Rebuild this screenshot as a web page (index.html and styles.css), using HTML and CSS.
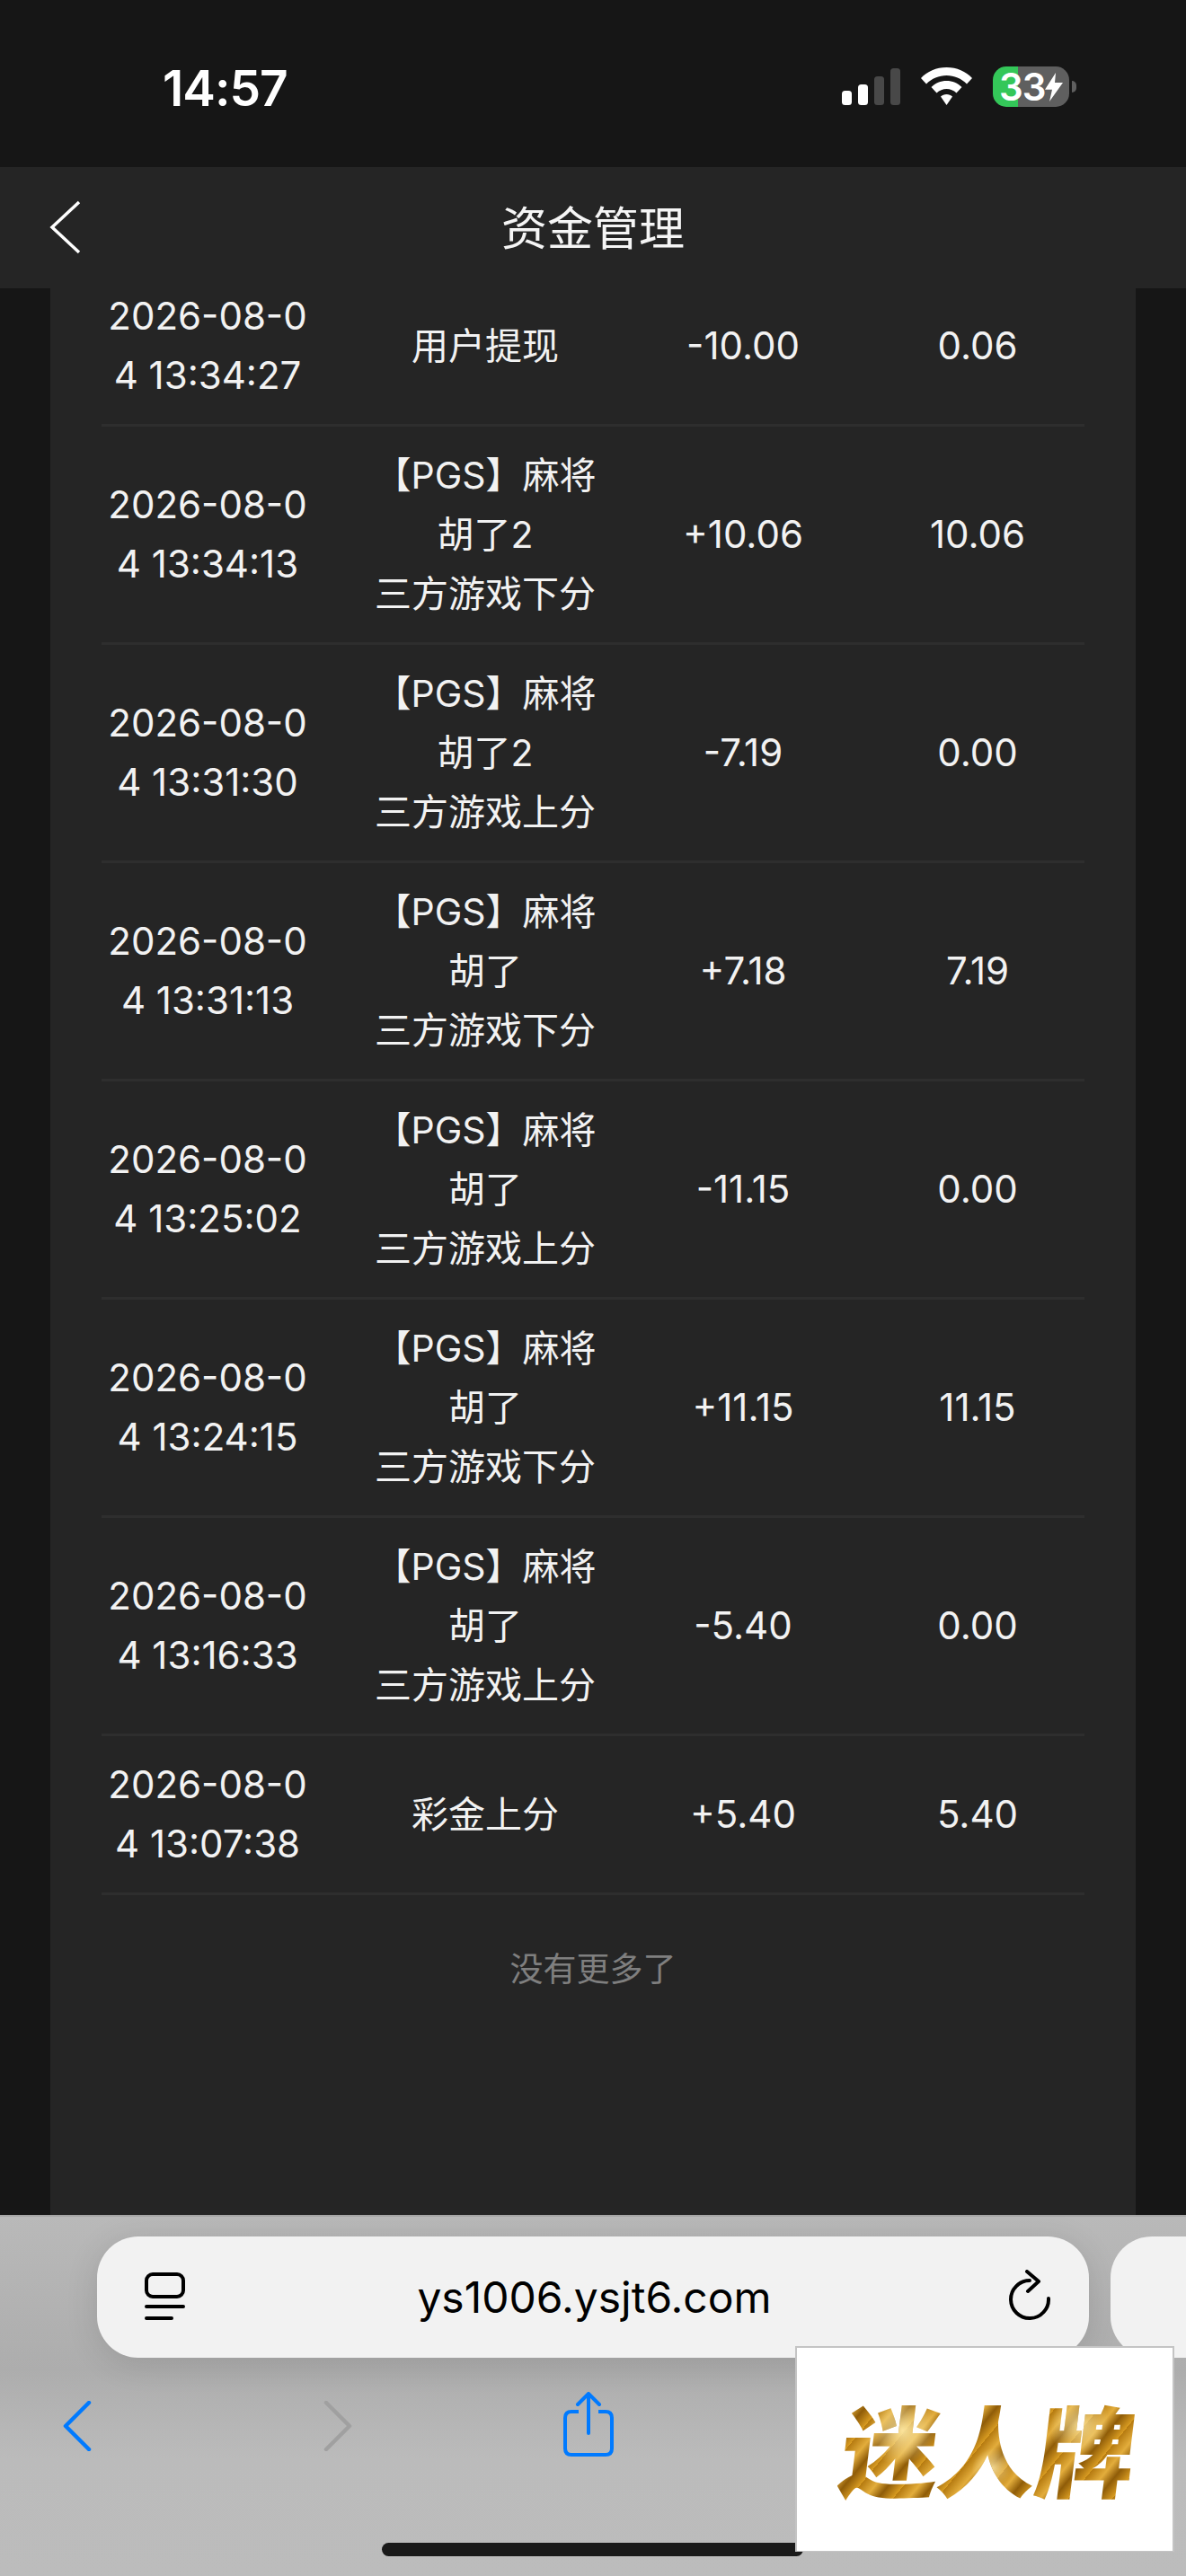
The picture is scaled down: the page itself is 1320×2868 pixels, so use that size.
FILE: index.html
```html
<!DOCTYPE html>
<html lang="zh-CN">
<head>
	<meta charset="UTF-8">
	<title>资金管理</title>
	<link rel="stylesheet" href="styles.css">
</head>
<body>
	<div class="phone">
		<header class="status-bar">
			<span class="time">14:57</span>
			<div class="status-icons">
				<svg class="signal" width="65" height="41" viewBox="0 0 65 41">
					<rect x="0" y="25" width="11" height="16" rx="3.5" fill="#fff"/>
					<rect x="18" y="18" width="11" height="23" rx="3.5" fill="#fff"/>
					<rect x="36" y="9" width="11" height="32" rx="3.5" fill="#484848"/>
					<rect x="54" y="0" width="11" height="41" rx="3.5" fill="#484848"/>
				</svg>
				<svg class="wifi" width="57" height="42" viewBox="0 0 57 42">
					<path d="M28.5 0C40 0 50 4.500 57 12L51 18.500C45 12.500 37 9 28.500 9S12 12.500 6 18.500L0 12C7 4.500 17 0 28.500 0Z" fill="#fff"/>
					<path d="M28.500 15C35 15 41 17.500 45.500 22L39.500 28.500C36.500 25.500 32.500 24 28.500 24S20.500 25.500 17.500 28.500L11.500 22C16 17.500 22 15 28.500 15Z" fill="#fff"/>
					<path d="M28.500 30C31 30 33.500 31 35 32.500L28.500 42L22 32.500C23.500 31 26 30 28.500 30Z" fill="#fff"/>
				</svg>
				<div class="battery">
					<div class="battery-body">
						<span class="battery-num">33</span>
						<svg class="bolt" width="20" height="32" viewBox="0 0 20 29" preserveAspectRatio="none"><path d="M12 0L0 17H8L5 29L20 10H11Z" fill="#fff"/></svg>
					</div>
					<span class="battery-nub"></span>
				</div>
			</div>
		</header>

		<nav class="title-bar">
			<svg class="title-back" width="36" height="60" viewBox="0 0 36 60"><path d="M33 2L3 30L33 58" fill="none" stroke="#fff" stroke-width="3.500"/></svg>
			<h1 class="title">资金管理</h1>
		</nav>

		<main class="page">
			<div class="panel">
				<div class="rows">
					<div class="row">
						<div class="cell-time">2026-08-04 13:34:27</div>
						<div class="cell-desc">用户提现</div>
						<div class="cell-amount">-10.00</div>
						<div class="cell-balance">0.06</div>
					</div>
					<div class="row">
						<div class="cell-time">2026-08-04 13:34:13</div>
						<div class="cell-desc"><div class="game">【PGS】麻将胡了2</div>三方游戏下分</div>
						<div class="cell-amount">+10.06</div>
						<div class="cell-balance">10.06</div>
					</div>
					<div class="row">
						<div class="cell-time">2026-08-04 13:31:30</div>
						<div class="cell-desc"><div class="game">【PGS】麻将胡了2</div>三方游戏上分</div>
						<div class="cell-amount">-7.19</div>
						<div class="cell-balance">0.00</div>
					</div>
					<div class="row">
						<div class="cell-time">2026-08-04 13:31:13</div>
						<div class="cell-desc"><div class="game">【PGS】麻将胡了</div>三方游戏下分</div>
						<div class="cell-amount">+7.18</div>
						<div class="cell-balance">7.19</div>
					</div>
					<div class="row">
						<div class="cell-time">2026-08-04 13:25:02</div>
						<div class="cell-desc"><div class="game">【PGS】麻将胡了</div>三方游戏上分</div>
						<div class="cell-amount">-11.15</div>
						<div class="cell-balance">0.00</div>
					</div>
					<div class="row">
						<div class="cell-time">2026-08-04 13:24:15</div>
						<div class="cell-desc"><div class="game">【PGS】麻将胡了</div>三方游戏下分</div>
						<div class="cell-amount">+11.15</div>
						<div class="cell-balance">11.15</div>
					</div>
					<div class="row">
						<div class="cell-time">2026-08-04 13:16:33</div>
						<div class="cell-desc"><div class="game">【PGS】麻将胡了</div>三方游戏上分</div>
						<div class="cell-amount">-5.40</div>
						<div class="cell-balance">0.00</div>
					</div>
					<div class="row">
						<div class="cell-time">2026-08-04 13:07:38</div>
						<div class="cell-desc">彩金上分</div>
						<div class="cell-amount">+5.40</div>
						<div class="cell-balance">5.40</div>
					</div>
				</div>
				<p class="no-more">没有更多了</p>
			</div>
		</main>

		<footer class="browser-bar">
			<div class="tabs">
				<div class="url-pill">
					<svg class="url-icon" width="45" height="53" viewBox="0 0 45 53">
						<rect x="2" y="2" width="41" height="25" rx="7" fill="none" stroke="#000" stroke-width="4"/>
						<path d="M2 38H43M2 51H30" fill="none" stroke="#000" stroke-width="4" stroke-linecap="round"/>
					</svg>
					<span class="url">ys1006.ysjt6.com</span>
					<svg class="reload" width="48" height="56" viewBox="0 0 48 56">
						<path d="M44 32A21 21 0 1 1 23 12" fill="none" stroke="#000" stroke-width="4" stroke-linecap="round"/>
						<path d="M20 2L33 13L21 24" fill="none" stroke="#000" stroke-width="4" stroke-linecap="round" stroke-linejoin="round"/>
					</svg>
				</div>
				<div class="next-pill"></div>
			</div>
			<div class="nav-icons">
				<svg class="nav-back" width="32" height="56" viewBox="0 0 32 56"><path d="M29 2L3 28L29 54" fill="none" stroke="#007aff" stroke-width="4.500" stroke-linecap="round" stroke-linejoin="round"/></svg>
				<svg class="nav-forward" width="32" height="56" viewBox="0 0 32 56"><path d="M3 2L29 28L3 54" fill="none" stroke="#a0a0a0" stroke-width="4.500" stroke-linecap="round" stroke-linejoin="round"/></svg>
				<svg class="nav-share" width="56" height="72" viewBox="0 0 56 72">
					<path d="M17 22H9Q2 22 2 29V63Q2 70 9 70H47Q54 70 54 63V29Q54 22 47 22H39" fill="none" stroke="#007aff" stroke-width="4"/>
					<path d="M28 46V2M16 14L28 2L40 14" fill="none" stroke="#007aff" stroke-width="4" stroke-linecap="round" stroke-linejoin="round"/>
				</svg>
			</div>
			<div class="home-bar"></div>
		</footer>

		<aside class="ad-badge">
			<span class="ad-text">迷人牌</span>
		</aside>
	</div>
</body>
</html>
```

FILE: styles.css
```css
* {
	padding: 0;
	margin: 0;
	box-sizing: border-box;
}
html, body {
	width: 1320px;
	height: 2868px;
	overflow: hidden;
	background: #161616;
}
body {
	font-family: "Inter", "Noto Sans CJK SC", sans-serif;
	color: #f2f2f2;
}
.phone {
	position: relative;
	width: 1320px;
	height: 2868px;
	display: flex;
	flex-direction: column;
	overflow: hidden;
}

/* 状态栏 */
.status-bar {
	height: 186px;
	flex: none;
	background: #161616;
	display: flex;
	justify-content: space-between;
	align-items: flex-start;
	padding: 68px 122px 0 181px;
}
.time {
	font-size: 55px;
	font-weight: 600;
	line-height: 60px;
	color: #fff;
	letter-spacing: -1px;
}
.status-icons {
	display: flex;
	align-items: flex-start;
	padding-top: 6px;
}
.signal {
	margin-top: 2px;
	margin-right: 23px;
}
.wifi {
	margin-top: 1px;
	margin-right: 23px;
}
.battery {
	display: flex;
	align-items: center;
}
.battery-body {
	width: 85px;
	height: 45px;
	border-radius: 15px;
	background: linear-gradient(90deg, #34c759 0, #34c759 28px, #5f5f5f 28px);
	display: flex;
	align-items: center;
	padding-left: 7px;
}
.battery-num {
	font-size: 42px;
	font-weight: 600;
	line-height: 45px;
	color: #fff;
	letter-spacing: -1px;
}
.battery-nub {
	width: 5px;
	height: 13px;
	margin-left: 3px;
	border-radius: 0 5px 5px 0;
	background: #5f5f5f;
}

/* 标题栏 */
.title-bar {
	position: relative;
	z-index: 2;
	height: 135px;
	flex: none;
	background: #252525;
	display: flex;
	align-items: center;
	justify-content: center;
	padding-bottom: 5px;
}
.title-back {
	position: absolute;
	left: 55px;
	top: 37px;
}
.title {
	font-size: 51px;
	font-weight: 400;
	line-height: 70px;
	color: #f5f5f5;
	font-family: "Noto Sans CJK SC", sans-serif;
}

/* 列表 */
.page {
	flex: 1;
	min-height: 0;
	padding: 0 56px;
	overflow: hidden;
}
.panel {
	height: 100%;
	background: #252525;
	padding: 0 57px;
	display: flow-root;
}
.rows {
	margin-top: -23px;
}
.row {
	display: grid;
	grid-template-columns: 236px 382px 192px 284px;
	align-items: center;
	text-align: center;
	font-size: 42px;
	line-height: 66px;
	padding: 21px 0;
	border-bottom: 3px solid #2e2e2e;
}
.cell-time {
	padding: 0 6px;
	word-break: break-all;
}
.cell-desc {
	font-size: 41px;
}
.game {
	width: 270px;
	margin: 0 auto;
}
.cell-balance {
	padding-left: 46px;
}
.no-more {
	margin-top: 50px;
	text-align: center;
	font-size: 37px;
	line-height: 66px;
	color: #7f7f7f;
}

/* 浏览器工具栏 */
.browser-bar {
	height: 402px;
	flex: none;
	border-top: 2px solid #a6a6a6;
	background: linear-gradient(180deg, #b9b9b9 0, #adadad 170px, #bbbbbb 270px, #bcbcbc 100%);
	display: flex;
	flex-direction: column;
	overflow: hidden;
}
.tabs {
	display: flex;
	gap: 24px;
	padding: 22px 0 0 108px;
}
.url-pill {
	width: 1104px;
	height: 135px;
	flex: none;
	border-radius: 46px;
	background: #f2f2f2;
	box-shadow: 0 6px 36px rgba(0,0,0,0.12);
	display: flex;
	align-items: center;
	padding: 0 41px 0 53px;
}
.url {
	flex: 1;
	padding-right: 6px;
	text-align: center;
	font-size: 48px;
	line-height: 60px;
	color: #000;
}
.url-icon {
	margin-top: -2px;
}
.reload {
	margin-top: -6px;
}
.next-pill {
	width: 200px;
	height: 135px;
	flex: none;
	border-radius: 46px;
	background: #f2f2f2;
}
.nav-icons {
	display: flex;
	align-items: flex-start;
	padding: 38px 0 0 70px;
}
.nav-back {
	margin-top: 10px;
}
.nav-forward {
	margin-top: 10px;
	margin-left: 258px;
}
.nav-share {
	margin-left: 235px;
}
.home-bar {
	width: 469px;
	height: 15px;
	margin: 96px 0 0 425px;
	border-radius: 8px;
	background: #1a1a1a;
}

/* 右下角角标 */
.ad-badge {
	position: absolute;
	left: 885px;
	top: 2612px;
	width: 422px;
	height: 229px;
	background: #fff;
	border: 2px solid #c4c4c4;
	border-bottom-width: 1px;
	display: flex;
	align-items: center;
	justify-content: center;
	padding: 0 0 6px 8px;
}
.ad-text {
	font-family: "Noto Sans CJK SC", sans-serif;
	font-size: 110px;
	font-weight: 900;
	line-height: 120px;
	letter-spacing: -1px;
	transform: skewX(-7deg);
	color: transparent;
	background:
		radial-gradient(circle at 20% 35%, rgba(255,236,170,0.9) 0, rgba(255,236,170,0) 14%),
		radial-gradient(circle at 52% 70%, rgba(255,230,160,0.9) 0, rgba(255,230,160,0) 12%),
		radial-gradient(circle at 80% 30%, rgba(255,236,170,0.8) 0, rgba(255,236,170,0) 12%),
		repeating-linear-gradient(125deg, #b57a10 0, #e3ad3c 14px, #8f5c08 26px, #d99c22 40px);
	-webkit-background-clip: text;
	background-clip: text;
}
```
